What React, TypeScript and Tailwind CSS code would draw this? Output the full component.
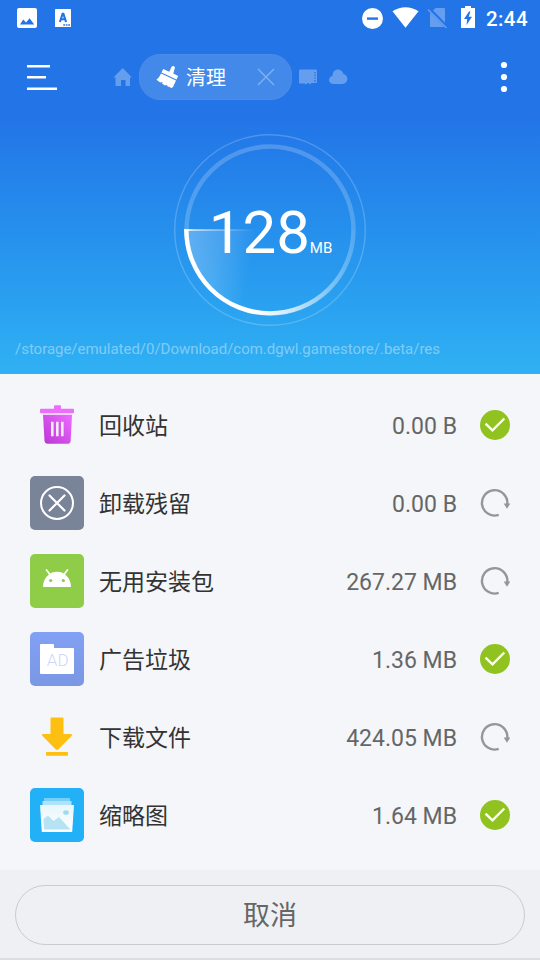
import React from 'react';

function StatusBar() {
  return (
    <div className="flex h-9 items-center justify-between">
      <svg width="90" height="36" viewBox="0 0 90 36" fill="white">
        <path fillRule="evenodd" d="M19 8H35a2 2 0 0 1 2 2V26a2 2 0 0 1-2 2H19a2 2 0 0 1-2-2V10a2 2 0 0 1 2-2ZM20 24.6H34.2L29.6 18.2L26 22.4L23.3 19.6Z" />
        <path d="M55.5 9H70.5a.5.5 0 0 1 .5.500V26.500a.5.5 0 0 1-.5.500H55.500a.5.5 0 0 1-.5-.5V9.500a.5.5 0 0 1 .5-.5Z" />
        <path d="M59.900 22L62.600 13.800H63.400L66.100 22M61.200 19.300H65" fill="none" stroke="#2374e7" strokeWidth="2.100" />
        <path d="M63.300 25H70" fill="none" stroke="#2374e7" strokeWidth="1.500" strokeDasharray="1.700 .8" />
      </svg>
      <div className="flex items-center">
        <svg width="128" height="36" viewBox="358 0 128 36" fill="white">
          <circle cx="372.500" cy="18.500" r="10.500" />
          <path d="M367 18.600H378" stroke="#2374e7" strokeWidth="2.400" />
          <path d="M392.500 11.300Q405.500 3.200 418.500 11.300L405.500 27.800Z" />
          <g>
            <path d="M435.500 8H444a1 1 0 0 1 1 1V26a1 1 0 0 1-1 1H431a1 1 0 0 1-1-1V13.500Z" opacity=".3" />
            <path d="M429 8.800L447 27.300" stroke="#2374e7" strokeWidth="3.500" />
            <path d="M428 9.500L446.500 28" stroke="#659eee" strokeWidth="1.600" />
          </g>
          <path d="M465 6H471V8H475V28H461V8H465Z" />
          <path d="M469 11.500L464 19H467.200L466.500 25L472 16.800H468.700L470.500 11.500Z" fill="#2374e7" />
        </svg>
        <span className="w-[54px] pt-[1px] text-[20.500px] leading-[34px] font-medium tracking-[0.400px]">2:44</span>
      </div>
    </div>
  );
}

function Toolbar() {
  return (
    <div className="flex h-[82px] items-center">
      <svg width="139" height="82" viewBox="0 36 139 82" fill="white">
        <path d="M27 66.200H50M27 77.300H46M27 88.700H57" stroke="white" strokeWidth="2.400" />
        <path d="M122.700 68L132 77.500H130V86H125.500V80H121V86H115.500V77.500H113.500Z" fill="#659eee" />
      </svg>
      <div className="flex h-[46px] w-[153px] items-center rounded-[21px] border border-[#4b8cea] bg-[#4389e9] pl-4">
        <svg width="24" height="24" viewBox="156 65 24 24" fill="white">
          <path d="M163.200 69L169.300 71.700L171.500 67Q173 65 175 67.200L173.300 73.500L178.200 76L176.500 79.500L161.500 72.500Z" />
          <path d="M161 73.400L176 80.400L173 87L171.500 88L167 86L167.300 84.700L165 85.400L162 83.500L162.700 82L160.200 82.400L156.500 79.800Q159.700 77 161 73.400Z" />
        </svg>
        <span className="ml-[6px] pt-[2px] text-[20px] leading-6">清理</span>
        <svg className="ml-[31px]" width="18" height="18" viewBox="0 0 18 18" fill="none">
          <path d="M1 1L17 17M17 1L1 17" stroke="#83b2f1" strokeWidth="1.300" />
        </svg>
      </div>
      <svg width="68" height="30" viewBox="292 62 68 30" fill="#659eee">
        <path d="M300 69.500H316a1 1 0 0 1 1 1V82a1 1 0 0 1-1 1H311.500L310 84.500L308.500 83H307.500L306 84.500L304.500 83.500H300a1 1 0 0 1-1-1V70.500a1 1 0 0 1 1-1Z" />
        <path d="M315 72V82" stroke="#2374e7" strokeWidth="1.700" strokeDasharray="1.400 1.300" strokeOpacity=".8" />
        <path d="M333.500 84C327.500 84 328 76.500 332.500 76C332.500 68 341.500 67.500 343.500 74C349 75 348.500 84 342.500 84Z" />
      </svg>
      <svg className="ml-auto mr-[26px]" width="20" height="40" viewBox="0 0 20 40" fill="white">
        <circle cx="10" cy="8" r="3.100" />
        <circle cx="10" cy="20" r="3.100" />
        <circle cx="10" cy="32" r="3.100" />
      </svg>
    </div>
  );
}

function Gauge() {
  return (
    <div className="mx-auto mt-[15px] grid h-[194px] w-[194px] place-items-center">
      <svg className="col-start-1 row-start-1" width="194" height="194" viewBox="173 133 194 194" fill="none">
        <defs>
          <linearGradient id="arc" gradientUnits="userSpaceOnUse" x1="184" y1="0" x2="356" y2="0">
            <stop offset="0" stopColor="white" />
            <stop offset=".42" stopColor="white" />
            <stop offset=".62" stopColor="white" stopOpacity=".7" />
            <stop offset=".85" stopColor="white" stopOpacity=".25" />
            <stop offset="1" stopColor="white" stopOpacity="0" />
          </linearGradient>
          <linearGradient id="sector" gradientUnits="userSpaceOnUse" x1="186" y1="230" x2="254" y2="242">
            <stop offset="0" stopColor="white" stopOpacity=".28" />
            <stop offset=".5" stopColor="white" stopOpacity=".16" />
            <stop offset="1" stopColor="white" stopOpacity="0" />
          </linearGradient>
          <linearGradient id="edge" gradientUnits="userSpaceOnUse" x1="184" y1="0" x2="254" y2="0">
            <stop offset="0" stopColor="white" />
            <stop offset=".15" stopColor="white" stopOpacity=".6" />
            <stop offset=".6" stopColor="white" stopOpacity=".25" />
            <stop offset="1" stopColor="white" stopOpacity="0" />
          </linearGradient>
        </defs>
        <circle cx="270" cy="230" r="95.300" stroke="white" strokeOpacity=".2" strokeWidth="1.400" />
        <circle cx="270" cy="230" r="83.500" stroke="white" strokeOpacity=".2" strokeWidth="4.500" />
        <path d="M187 230A83 83 0 0 0 270 313V230Z" fill="url(#sector)" />
        <rect x="184" y="229" width="70" height="2" fill="url(#edge)" />
        <path d="M186.300 229.500A83.500 83.500 0 0 0 353.500 230" stroke="url(#arc)" strokeWidth="4.400" />
      </svg>
      <div className="col-start-1 row-start-1 flex items-baseline pt-[5px] pl-px">
        <span className="text-[60px] leading-[66px]">128</span>
        <span className="text-[15px]">MB</span>
      </div>
    </div>
  );
}

function TrashIcon() {
  return (
    <svg width="54" height="54" viewBox="0 -3.700 54 54">
      <defs>
        <linearGradient id="trash" x1="1" y1="0" x2="0" y2="1">
          <stop offset="0" stopColor="#ee6cff" />
          <stop offset="1" stopColor="#b936d4" />
        </linearGradient>
      </defs>
      <path d="M11 7H24V4.500a1 1 0 0 1 1-1H30a1 1 0 0 1 1 1V7H43a1 1 0 0 1 1 1V10.500a1 1 0 0 1-1 1H11a1 1 0 0 1-1-1V8a1 1 0 0 1 1-1Z" fill="#ec6efd" />
      <path d="M13 13H42L40.700 39Q40.500 42 38 42H17.500Q15 42 14.500 39Z" fill="url(#trash)" />
      <path d="M22.300 20V34.500M27.300 20V34.500M32.300 20V34.500" stroke="#fbeafd" strokeWidth="2.600" />
    </svg>
  );
}

function UninstallIcon() {
  return (
    <svg width="54" height="54" viewBox="0 0 54 54" fill="none" stroke="white">
      <rect width="54" height="54" rx="5" fill="#798499" stroke="none" />
      <circle cx="27" cy="27" r="16" strokeWidth="2" />
      <path d="M19.500 19.500L34.500 34.500M34.500 19.500L19.500 34.500" strokeWidth="2.200" strokeLinecap="round" />
    </svg>
  );
}

function AndroidIcon() {
  return (
    <svg width="54" height="54" viewBox="0 0 54 54">
      <rect width="54" height="54" rx="5" fill="#8fcd49" />
      <path d="M13 33A14 15.200 0 0 1 41 33Z" fill="white" />
      <path d="M16.500 16L20.500 21M37.500 16L33.500 21" stroke="white" strokeWidth="1.700" strokeLinecap="round" />
      <circle cx="20.700" cy="26.500" r="1.600" fill="#8fcd49" />
      <circle cx="33.300" cy="26.500" r="1.600" fill="#8fcd49" />
    </svg>
  );
}

function AdIcon() {
  return (
    <svg width="54" height="54" viewBox="0 0 54 54">
      <defs>
        <linearGradient id="ad" x1="0" y1="0" x2="0" y2="1">
          <stop offset="0" stopColor="#82a1f4" />
          <stop offset="1" stopColor="#7a97e4" />
        </linearGradient>
      </defs>
      <rect width="54" height="54" rx="5" fill="url(#ad)" />
      <path d="M11 12H23a1 1 0 0 1 1 1V16H43a1 1 0 0 1 1 1V41a1 1 0 0 1-1 1H11a1 1 0 0 1-1-1V13a1 1 0 0 1 1-1Z" fill="white" />
      <text x="27.700" y="34.300" textAnchor="middle" fontSize="17" fill="#ccd8fb" className="font-['Roboto'] font-light">AD</text>
    </svg>
  );
}

function DownloadIcon() {
  return (
    <svg width="54" height="54" viewBox="0 -2 54 54" fill="#fdbf12">
      <path d="M21.500 5.500H32.500a1 1 0 0 1 1 1V22H41Q43 22 41.500 24L28.500 37.300Q27 38.800 25.500 37.300L12.500 24Q11 22 13 22H20.500V6.500a1 1 0 0 1 1-1Z" />
      <rect x="16" y="40" width="22" height="3.700" rx=".7" />
    </svg>
  );
}

function ThumbnailIcon() {
  return (
    <svg width="54" height="54" viewBox="0 0 54 54">
      <defs>
        <linearGradient id="photo" x1="0" y1="0" x2="0" y2="1">
          <stop offset="0" stopColor="#e8f6fc" />
          <stop offset="1" stopColor="#fff" />
        </linearGradient>
      </defs>
      <rect width="54" height="54" rx="5" fill="#22b0f7" />
      <rect x="14" y="10" width="26" height="5" fill="#76cef9" />
      <rect x="12.500" y="13" width="29" height="5" fill="#b0e2fa" />
      <path d="M10 17H44L42.200 44H11.800Z" fill="url(#photo)" />
      <path d="M13.500 31L18 27.500L23.500 33L29 29L40.500 41.500H14Z" fill="#b6e3f3" />
      <ellipse cx="36" cy="24.500" rx="2.800" ry="2.300" fill="#9edbee" />
    </svg>
  );
}

function CheckMark() {
  return (
    <svg width="30" height="30" viewBox="0 0 30 30" fill="none">
      <circle cx="15" cy="15" r="15" fill="#90c320" />
      <path d="M5.500 13.700L12.500 20.300L24.300 8.500" stroke="white" strokeWidth="2.400" />
    </svg>
  );
}

function Spinner() {
  return (
    <svg width="30" height="30" viewBox="0 0 30 30" fill="none">
      <path d="M18.700 26.900A12.700 12.700 0 1 1 27.300 16" stroke="#959697" strokeWidth="2.400" />
      <path d="M23.700 15.500H30.300L27 20.800Z" fill="#959697" />
    </svg>
  );
}

const rows = [
  { name: '回收站', size: '0.00 B', Icon: TrashIcon, done: true },
  { name: '卸载残留', size: '0.00 B', Icon: UninstallIcon, done: false },
  { name: '无用安装包', size: '267.27 MB', Icon: AndroidIcon, done: false },
  { name: '广告垃圾', size: '1.36 MB', Icon: AdIcon, done: true },
  { name: '下载文件', size: '424.05 MB', Icon: DownloadIcon, done: false },
  { name: '缩略图', size: '1.64 MB', Icon: ThumbnailIcon, done: true },
];

export default function App() {
  return (
    <div className="flex h-[960px] w-[540px] flex-col overflow-hidden bg-[#f4f6f9] font-['Roboto','Noto_Sans_CJK_SC',sans-serif]">
      <header className="h-[374px] bg-linear-to-b from-[#2374e7] from-[31%] to-[#30b1f3] text-white">
        <StatusBar />
        <Toolbar />
        <Gauge />
        <p className="mt-[12px] ml-[15px] text-[15px] leading-5 tracking-[-0.025px] text-white/40">
          /storage/emulated/0/Download/com.dgwl.gamestore/.beta/res
        </p>
      </header>
      <main className="flex-1 pt-3">
        {rows.map(({ name, size, Icon, done }) => (
          <div key={name} className="flex h-[78px] items-center px-[30px]">
            <Icon />
            <span className="ml-[15px] pt-[4px] text-[23px] leading-8 text-[#333]">{name}</span>
            <span className="mr-[23px] ml-auto pt-[4px] text-[23px] leading-8 text-[#666]">{size}</span>
            {done ? <CheckMark /> : <Spinner />}
          </div>
        ))}
      </main>
      <footer className="h-[90px] border-b-2 border-[#dcdddf] bg-[#eff0f3] px-[15px] pt-[15px]">
        <button className="h-[60px] w-full rounded-[30px] border-[1.500px] border-[#cacbcd] pt-[2px] text-[27px] leading-8 text-[#666]">取消</button>
      </footer>
    </div>
  );
}
